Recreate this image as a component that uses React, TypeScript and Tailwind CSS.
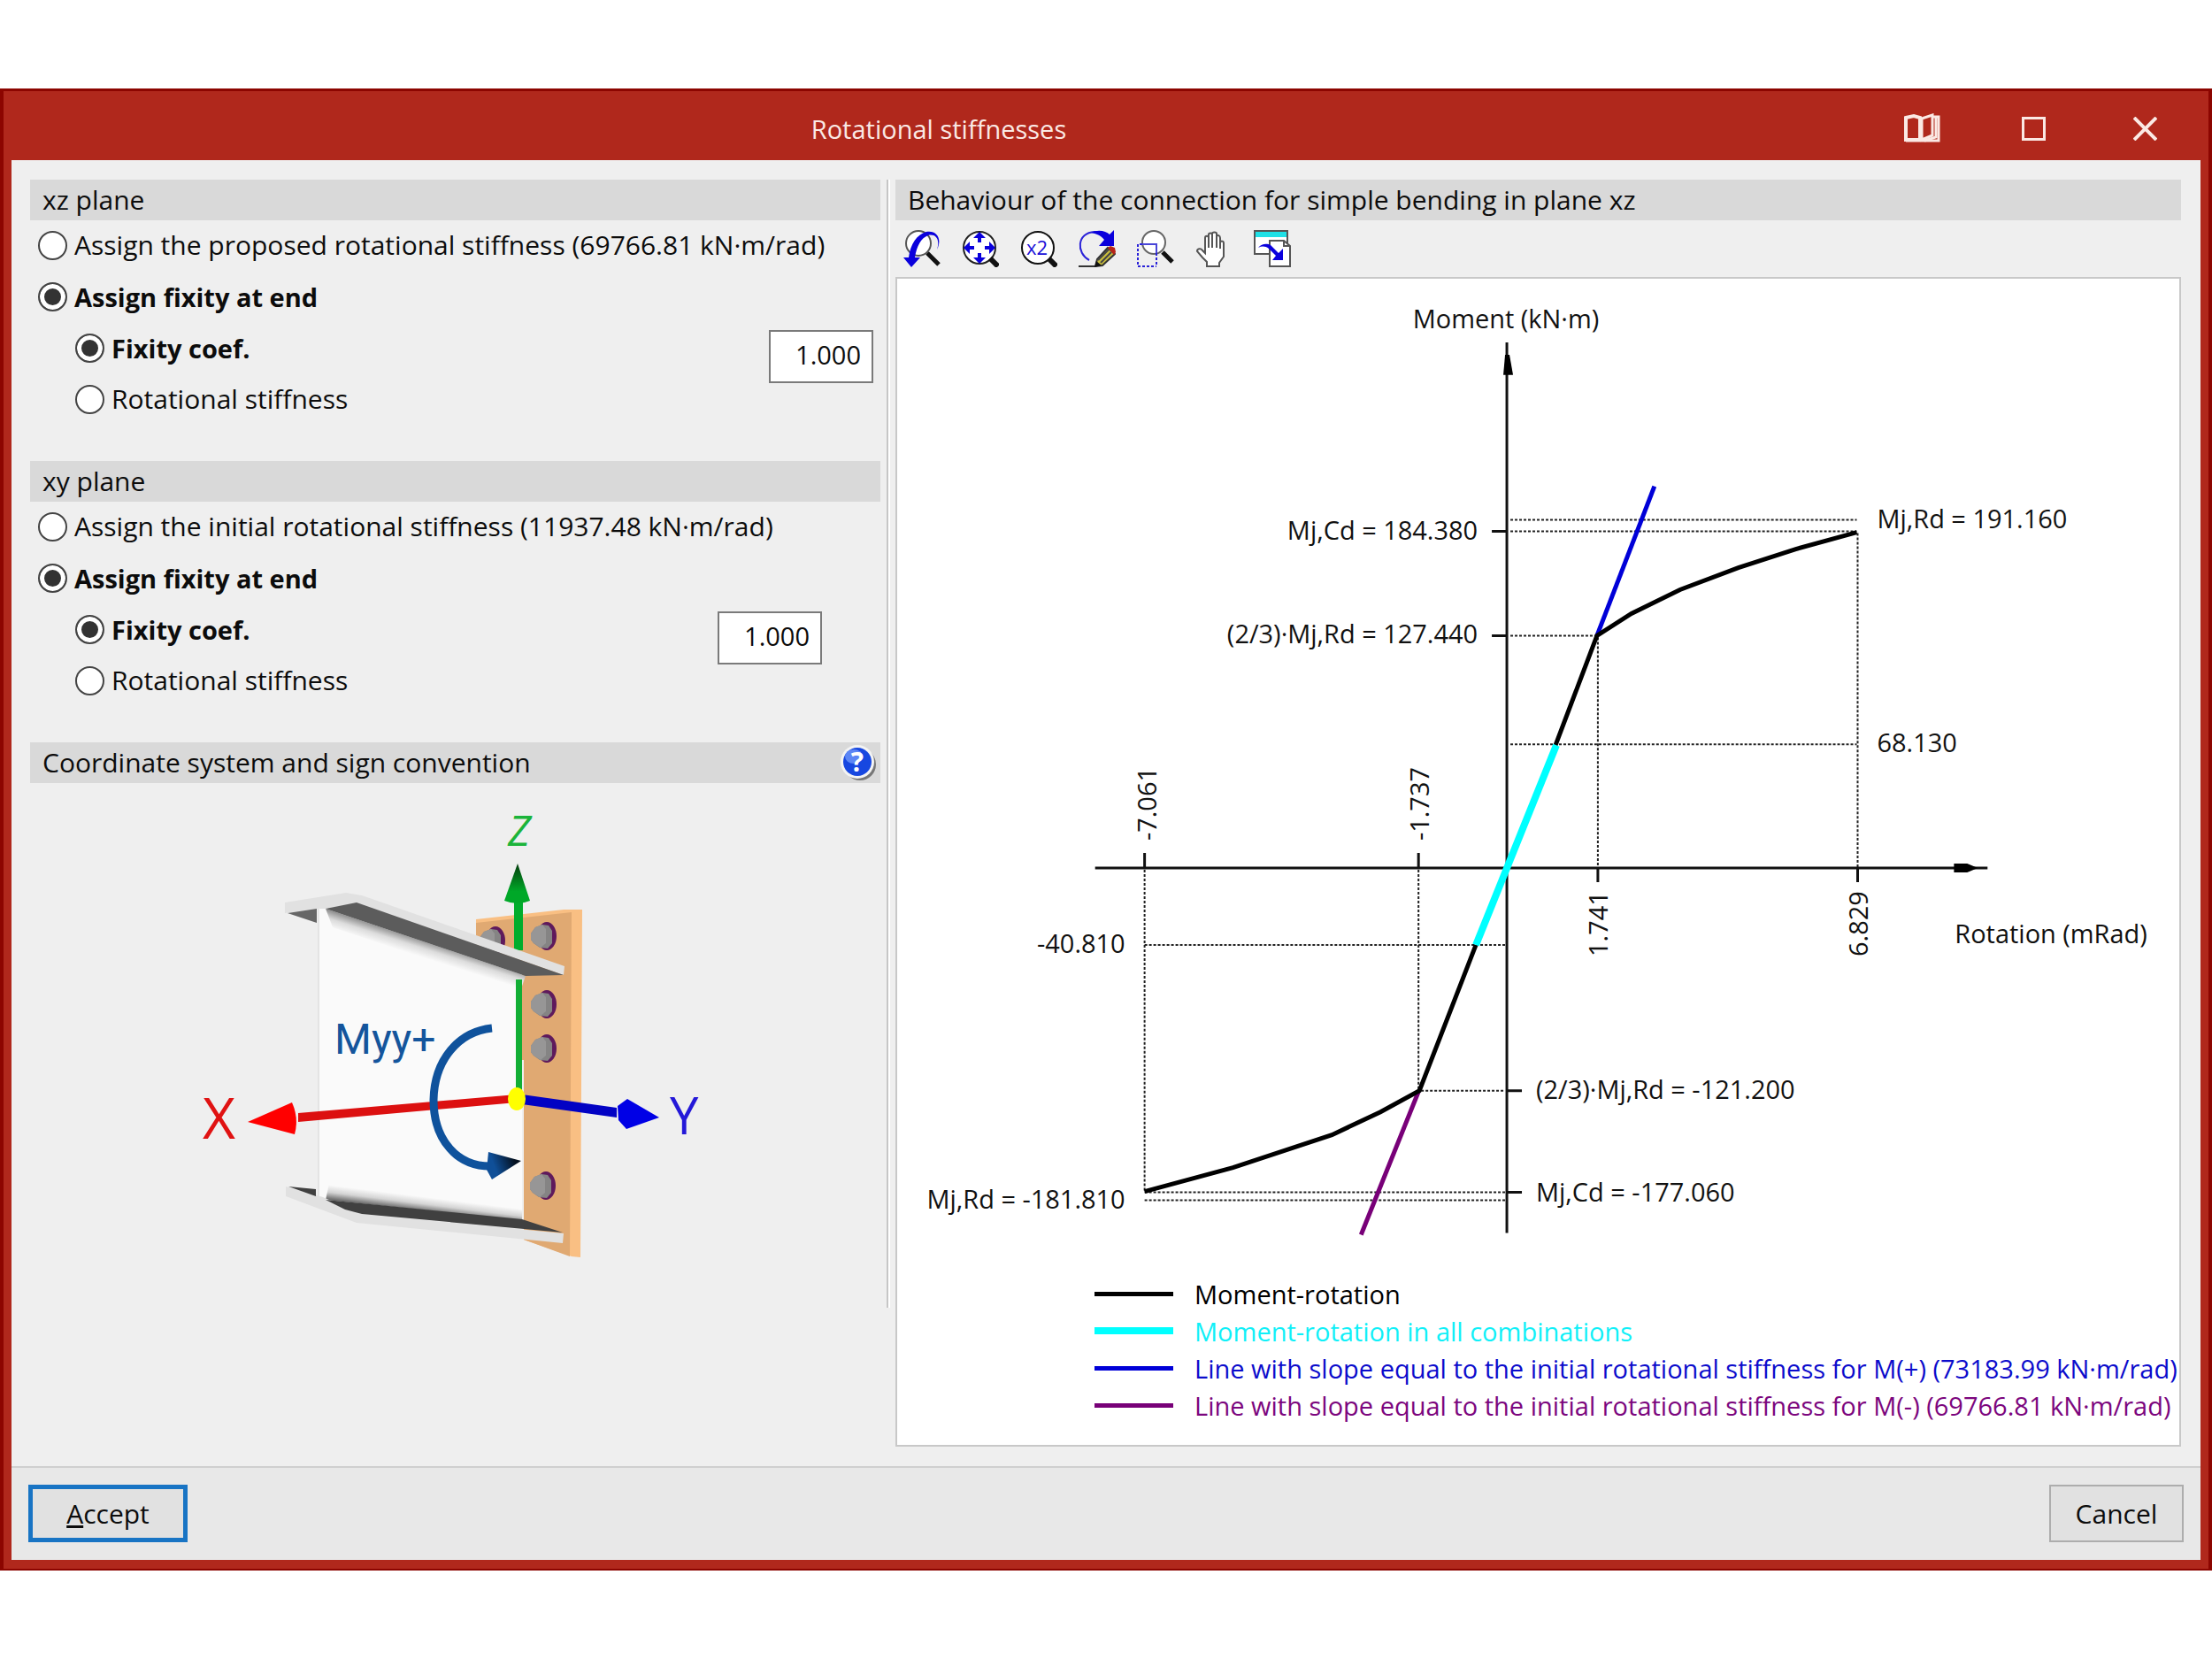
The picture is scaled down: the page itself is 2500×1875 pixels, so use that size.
import React from "react";

type Plane = {
  id: string;
  title: string;
  assignLabel: string;
  inputClass: string;
};

const planes: Plane[] = [
  {
    id: "xz",
    title: "xz plane",
    assignLabel: "Assign the proposed rotational stiffness (69766.81 kN·m/rad)",
    inputClass: "mr-2",
  },
  {
    id: "xy",
    title: "xy plane",
    assignLabel: "Assign the initial rotational stiffness (11937.48 kN·m/rad)",
    inputClass: "mr-[66px]",
  },
];

const legend = [
  { label: "Moment-rotation", line: "h-[5px] bg-black", text: "text-black" },
  { label: "Moment-rotation in all combinations", line: "h-[8px] bg-[#00ffff]", text: "text-[#10f0f8]" },
  {
    label: "Line with slope equal to the initial rotational stiffness for M(+) (73183.99 kN·m/rad)",
    line: "h-[5px] bg-[#0000d8]",
    text: "text-[#0c0ccc]",
  },
  {
    label: "Line with slope equal to the initial rotational stiffness for M(-) (69766.81 kN·m/rad)",
    line: "h-[5px] bg-[#780078]",
    text: "text-[#7c067e]",
  },
];

function SectionHeader({ title, children }: { title: string; children?: React.ReactNode }) {
  return (
    <div className="flex h-[46px] items-center justify-between bg-[#d9d9d9] pr-1 pb-px pl-[14px] text-[30px]">
      <h2>{title}</h2>
      {children}
    </div>
  );
}

function Radio({ name, label, checked }: { name: string; label: string; checked?: boolean }) {
  return (
    <label
      className={
        checked
          ? "flex h-[58px] items-center gap-2 pb-0.5 text-[29px] font-bold"
          : "flex h-[58px] items-center gap-2 pb-0.5 text-[30px]"
      }
    >
      <input
        type="radio"
        name={name}
        defaultChecked={checked}
        className="size-[33px] shrink-0 appearance-none rounded-full border-2 border-[#444] bg-white checked:bg-[#333] checked:shadow-[inset_0_0_0_5px_white]"
      />
      {label}
    </label>
  );
}

function PlaneSection({ plane }: { plane: Plane }) {
  return (
    <section className="mb-10">
      <SectionHeader title={plane.title} />
      <div className="pl-[9px]">
        <Radio name={`${plane.id}-mode`} label={plane.assignLabel} />
        <Radio name={`${plane.id}-mode`} label="Assign fixity at end" checked />
      </div>
      <div className="flex items-start justify-between pl-[51px]">
        <div>
          <Radio name={`${plane.id}-value`} label="Fixity coef." checked />
          <Radio name={`${plane.id}-value`} label="Rotational stiffness" />
        </div>
        <div className={plane.inputClass}>
          <input
            type="text"
            aria-label={`Fixity coefficient, ${plane.title}`}
            defaultValue="1.000"
            className="mt-2 h-[60px] w-[118px] border-2 border-[#7a7a7a] bg-white pr-3 pb-1.5 text-right"
          />
        </div>
      </div>
    </section>
  );
}

function Bolt({ x, y }: { x: number; y: number }) {
  return (
    <g transform={`translate(${x} ${y})`}>
      <ellipse cx="1" cy="0" rx="11" ry="16" fill="#5f1a5c" />
      <path d="M-17 -3 L-12 -10 L-4 -13 L3 -12 L7 -6 L7 8 L2 14 L-7 13 L-14 8 L-17 4 Z" fill="#858484" />
      <path d="M-17 -3 L-12 -10 L-4 -13 L0 -8 L0 8 L-6 13 L-14 8 L-17 4 Z" fill="#979696" />
    </g>
  );
}

function AxesDrawing() {
  return (
    <svg viewBox="-166 -13 961 573" className="block w-full" role="img" aria-label="Coordinate system">
      <defs>
        <linearGradient id="topShade" gradientUnits="userSpaceOnUse" x1="280" y1="164" x2="274" y2="183">
          <stop offset="0" stopColor="#8a8a8a" />
          <stop offset="0.5" stopColor="#dcdcdc" />
          <stop offset="1" stopColor="#fafafa" />
        </linearGradient>
        <linearGradient id="bottomShade" gradientUnits="userSpaceOnUse" x1="280" y1="471" x2="282" y2="455">
          <stop offset="0" stopColor="#6a6a6a" />
          <stop offset="0.5" stopColor="#d4d4d4" />
          <stop offset="1" stopColor="#fafafa" />
        </linearGradient>
        <linearGradient id="zHead" x1="0" y1="0" x2="0" y2="1">
          <stop offset="0" stopColor="#053c0d" />
          <stop offset="0.7" stopColor="#00a828" />
        </linearGradient>
        <linearGradient id="mHead" x1="0" y1="0.5" x2="1" y2="0.2">
          <stop offset="0.2" stopColor="#0f4f98" />
          <stop offset="0.8" stopColor="#04101f" />
        </linearGradient>
      </defs>

      {/* end plate and bolts */}
      <path d="M338 141 L437 130 L458 130 L456 523 L446 522 L392 503 L392 300 L338 300 Z" fill="#f9bf83" />
      <path d="M338 145 L446 133 L444 522 L392 503 L392 300 L338 300 Z" fill="#e0a972" />
      <Bolt x={359} y={165} />
      <Bolt x={417} y={160} />
      <Bolt x={417} y={237} />
      <Bolt x={417} y={287} />
      <Bolt x={416} y={442} />

      <path d="M381 119 H391 V176 H381 Z" fill="#00ad2c" />
      <path d="M385 78 L399 120 Q385 126 370 120 Z" fill="url(#zHead)" />

      {/* beam */}
      <path d="M161 128 L200 125 L390 200 L390 480 L161 456 Z" fill="#fafafa" />
      <path d="M160 129 V456" stroke="#e4e4e4" strokeWidth="2" />
      <path d="M168 129 L394 205 L388 222 L176 150 Z" fill="url(#topShade)" />
      <path d="M168 458 L390 481 L390 465 L172 440 Z" fill="url(#bottomShade)" />
      <path d="M122 122 L191 111 L209 114 L438 194 L437 204 L203 123 L168 129 L160 129 L122 134 Z" fill="#e1e1e1" />
      <path d="M168 129 L203 122 L437 204 L394 205 Z" fill="#5c5c5c" />
      <path d="M125 134 L158 129 V145 Z" fill="#666" />
      <path d="M123 443 L165 455 L209 474 L437 496 L436 507 L203 484 L123 454 Z" fill="#e1e1e1" />
      <path d="M168 458 L390 480 L436 495 L209 474 L190 469 Z" fill="#404040" />
      <path d="M126 443 L157 446 V454 Z" fill="#404040" />

      <path d="M383 209 H390 V336 H383 Z" fill="#12ae35" />

      {/* X and Y axes */}
      <path d="M384 339 L384 348 L137 370 L137 360 Z" fill="#dc1010" />
      <path d="M80 370 L130 348 Q138 366 133 384 Z" fill="#f00" />
      <path d="M390 339 L497 354 L497 365 L390 350 Z" fill="#0202c4" />
      <path d="M545 365 L509 344 L498 352 L499 368 L508 378 Z" fill="#0000e6" />
      <path d="M356 264 C318 268 291 300 290 345 C290 392 318 420 354 420" fill="none" stroke="#0f529c" strokeWidth="9" />
      <path d="M352 404 L389 414 L356 435 L350 424 Z" fill="url(#mHead)" />
      <ellipse cx="384" cy="344" rx="10" ry="13" fill="#ffff00" />

      <g>
        <text x="374" y="58" fontSize="48" fontStyle="italic" fill="#1bb43a">Z</text>
        <text x="29" y="389" fontSize="64" fill="#e01212">X</text>
        <text x="557" y="384" fontSize="58" fill="#2418d8">Y</text>
        <text x="178" y="293" fontSize="48" fontFamily="Roboto, sans-serif" fill="#14559c">Myy+</text>
      </g>
    </svg>
  );
}

function HelpIcon() {
  return (
    <svg viewBox="0 0 42 42" className="block size-[42px]">
      <circle cx="23" cy="23" r="18" fill="#777" />
      <circle cx="20" cy="20" r="19" fill="#f4f4f4" />
      <circle cx="20" cy="20" r="16" fill="#1747e0" />
      <ellipse cx="16" cy="14" rx="10" ry="8" fill="#5c86f5" />
      <text x="20" y="31" fontSize="30" fontWeight="700" textAnchor="middle" fill="#fff">?</text>
    </svg>
  );
}

const tools = [
  {
    name: "Zoom previous",
    icon: (
      <>
        <circle cx="17" cy="15" r="14" fill="#fff" stroke="#555" strokeWidth="2" />
        <path d="M27 26 L40 39" stroke="#111" strokeWidth="5" />
        <path d="M38 22 C42 10 36 4 28 6 C20 9 15 18 13 31 H19 L9 42 L0 31 H6 C8 16 15 5 26 2 C38 0 44 10 38 22 Z" fill="#0a00dc" />
      </>
    ),
  },
  {
    name: "Zoom all",
    icon: (
      <>
        <circle cx="20" cy="20" r="18" fill="#fff" stroke="#222" strokeWidth="2" />
        <path d="M32 32 L41 41" stroke="#111" strokeWidth="6" />
        <path d="M20 2 L27 9 H22 V14 H18 V9 H13 Z M20 38 L27 31 H22 V26 H18 V31 H13 Z M2 20 L9 13 V18 H14 V22 H9 V27 Z M38 20 L31 13 V18 H26 V22 H31 V27 Z" fill="#0a00dc" />
      </>
    ),
  },
  {
    name: "Zoom x2",
    icon: (
      <>
        <circle cx="20" cy="20" r="18" fill="#fff" stroke="#111" strokeWidth="2" />
        <path d="M33 33 L41 41" stroke="#111" strokeWidth="6" />
        <text x="19" y="28" fontSize="22" textAnchor="middle" fill="#1a10d8">x2</text>
      </>
    ),
  },
  {
    name: "Redraw",
    icon: (
      <>
        <path d="M12 34 C-3 26 -2 3 18 2 C24 2 29 4 33 8" fill="none" stroke="#2a22d8" strokeWidth="2" />
        <path d="M14 3 C22 -1 31 1 35 5 L40 0 V18 H23 L29 11 C25 6 20 4 14 3 Z" fill="#0a00dc" />
        <path d="M0 41 H20" stroke="#333" strokeWidth="2" />
        <path d="M33 20 L41 27 L27 40 L19 41 L21 33 Z" fill="#c9be3c" stroke="#333" strokeWidth="2" />
        <path d="M33 20 L36 18 L41 20 L42 25 L40 28 Z" fill="#b82418" />
        <path d="M25 37 L37 25 M22 34 L34 22" stroke="#444" strokeWidth="2" />
        <path d="M18 42 L20 35 L26 40 Z" fill="#111" />
      </>
    ),
  },
  {
    name: "Zoom window",
    icon: (
      <>
        <circle cx="19" cy="14" r="13" fill="#fff" stroke="#666" strokeWidth="2" />
        <path d="M29 25 L40 36" stroke="#111" strokeWidth="5" />
        <path d="M6 16 H22 V26" fill="none" stroke="#4a46d8" strokeWidth="2" />
        <path d="M22 26 V41 M6 16 H1 V41 H22" fill="none" stroke="#2a22d8" strokeWidth="2" strokeDasharray="3 2" />
      </>
    ),
  },
  {
    name: "Pan",
    icon: (
      <path
        d="M13 41 V36 L8 31 L2 24 C2 21 6 20 8 23 L11 26 V9 C11 6 15 6 15 9 V20 V5 C15 3 19 3 19 5 V20 V4 C19 2 24 2 24 4 V20 V7 C25 5 28 6 28 9 V21 V14 C29 12 32 12 32 15 V30 L27 37 V41 Z"
        fill="#fff"
        stroke="#555"
        strokeWidth="2"
      />
    ),
  },
  {
    name: "Export view",
    icon: (
      <>
        <path d="M1 1 H38 V27 H1 Z" fill="#fff" stroke="#555" strokeWidth="2" />
        <path d="M2 2 H37 V8 H2 Z" fill="#1fe0e6" />
        <path d="M18 12 H34 L41 18 V41 H18 Z" fill="#fff" stroke="#555" strokeWidth="2" />
        <path d="M34 12 V18 H41" fill="none" stroke="#555" strokeWidth="2" />
        <path d="M5 20 C9 15 15 15 19 17 L28 26 L33 21 V34 H21 L25 29 L17 21 C13 18 9 18 5 20 Z" fill="#0a00dc" />
      </>
    ),
  },
];

function Chart() {
  return (
    <svg viewBox="1013 314 1451 1128" className="block w-full" role="img" aria-label="Moment-rotation diagram">
      {/* guides */}
      <g fill="none" stroke="#222" strokeWidth="2" strokeDasharray="3 2">
        <path d="M1707 587 H2099" />
        <path d="M1707 600 H2099" />
        <path d="M1707 718 H1805" />
        <path d="M1707 841 H2099" />
        <path d="M1806 720 V981" />
        <path d="M2100 602 V981" />
        <path d="M1293 983 V1346" />
        <path d="M1603 983 V1232" />
        <path d="M1293 1068 H1701" />
        <path d="M1606 1233 H1701" />
        <path d="M1293 1348 H1701" />
        <path d="M1293 1357 H1701" />
      </g>

      {/* axes and ticks */}
      <g fill="none" stroke="#111" strokeWidth="3">
        <path d="M1703 386 V1394" />
        <path d="M1237 981 H2247" />
        <path d="M1686 600 H1703 M1686 718 H1703 M1703 1233 H1720 M1703 1348 H1720" />
        <path d="M1293 964 V981 M1603 964 V981 M1806 981 V997 M2100 981 V997" />
      </g>
      <path d="M1701 400 H1706 L1710 423 H1699 Z" />
      <path d="M2209 976 H2224 L2236 981 L2224 986 H2209 Z" />

      {/* curves */}
      <g fill="none" strokeWidth="5">
        <path d="M1805 718 L1870 549" stroke="#0000d8" />
        <path d="M1603 1234 L1538 1396" stroke="#780078" />
        <path
          d="M1293 1347 L1393 1320 L1505 1283 L1560 1257 L1604 1233 L1668 1068"
          stroke="#000"
        />
        <path d="M1758 842 L1805 718 L1844 693 L1899 666 L1965 641 L2030 620 L2099 601" stroke="#000" />
        <path d="M1668 1068 L1759 842" stroke="#00ffff" strokeWidth="8" />
      </g>

      <g fontSize="29" fill="#111">
        <text x="1702" y="370" textAnchor="middle">Moment (kN·m)</text>
        <text x="2210" y="1066">Rotation (mRad)</text>
        <text x="1670" y="609" textAnchor="end">Mj,Cd = 184.380</text>
        <text x="1670" y="727" textAnchor="end">(2/3)·Mj,Rd = 127.440</text>
        <text x="2122" y="596">Mj,Rd = 191.160</text>
        <text x="2122" y="850">68.130</text>
        <text x="1271" y="1077" textAnchor="end">-40.810</text>
        <text x="1271" y="1366" textAnchor="end">Mj,Rd = -181.810</text>
        <text x="1736" y="1242">(2/3)·Mj,Rd = -121.200</text>
        <text x="1736" y="1358">Mj,Cd = -177.060</text>
        <text transform="translate(1306 950) rotate(-90)">-7.061</text>
        <text transform="translate(1615 950) rotate(-90)">-1.737</text>
        <text transform="translate(1817 1081) rotate(-90)">1.741</text>
        <text transform="translate(2112 1081) rotate(-90)">6.829</text>
      </g>
    </svg>
  );
}

function TitleBar() {
  return (
    <header className="flex h-[78px] items-center pt-1.5 text-[#fbe9e4]">
      <h1 className="flex-1 text-center">Rotational stiffnesses</h1>
      <button type="button" aria-label="Help" className="flex h-full w-[126px] items-center justify-center">
        <svg viewBox="0 0 42 34" className="h-[34px] w-[42px]" fill="none" stroke="currentColor">
          <path d="M3 5 L12 3 L19 5 V30 H3 Z" strokeWidth="4" />
          <path d="M21 6 L33 2 V25 L21 30 Z" strokeWidth="3" />
          <path d="M37 4 V27 L24 31" strokeWidth="3" />
          <path d="M34 4 H40 V31 H3" strokeWidth="3" />
        </svg>
      </button>
      <button type="button" aria-label="Maximize" className="flex h-full w-[126px] items-center justify-center">
        <span className="size-[27px] border-[3px] border-current" />
      </button>
      <button type="button" aria-label="Close" className="flex h-full w-[126px] items-center justify-center">
        <svg viewBox="0 0 27 27" className="size-[27px]" stroke="currentColor" strokeWidth="4">
          <path d="M1 1 L26 26 M26 1 L1 26" />
        </svg>
      </button>
    </header>
  );
}

export default function App() {
  return (
    <main className="bg-white py-[100px] font-['Open_Sans','Noto_Sans',sans-serif] text-[29px] leading-none text-[#0c0c0c]">
      <div className="border-x-4 border-t-[3px] border-b-2 border-[#8c0500] bg-[#b0281c] px-[9px] pb-[10px]">
        <TitleBar />

        <div className="bg-[#efefef]">
          <div className="grid grid-cols-[961fr_17px_1453fr] pt-[22px] pr-[22px] pb-[22px] pl-[21px]">
            <div>
              {planes.map((p) => (
                <PlaneSection key={p.id} plane={p} />
              ))}
              <section>
                <SectionHeader title="Coordinate system and sign convention">
                  <button type="button" aria-label="Help">
                    <HelpIcon />
                  </button>
                </SectionHeader>
                <AxesDrawing />
              </section>
            </div>

            <div className="mx-auto mb-[157px] w-1 border-l-2 border-r-2 border-l-[#c6c6c6] border-r-white" />

            <section className="min-w-0">
              <SectionHeader title="Behaviour of the connection for simple bending in plane xz" />
              <div className="flex h-16 items-center gap-6 pl-[9px]">
                {tools.map((t) => (
                  <button key={t.name} type="button" aria-label={t.name} title={t.name}>
                    <svg viewBox="0 0 42 42" className="block size-[42px]" fill="none">
                      {t.icon}
                    </svg>
                  </button>
                ))}
              </div>
              <div className="overflow-hidden border-2 border-[#c8c8c8] bg-white pb-6">
                <Chart />
                <ul className="pl-[223px]">
                  {legend.map((l) => (
                    <li key={l.label} className="flex h-[42px] items-center gap-6 whitespace-nowrap">
                      <span className={`w-[89px] shrink-0 ${l.line}`} />
                      <span className={l.text}>{l.label}</span>
                    </li>
                  ))}
                </ul>
              </div>
            </section>
          </div>

          <footer className="flex items-center justify-between border-t-2 border-[#cfcfcf] bg-[#e8e8e8] px-[19px] pt-[19px] pb-5">
            <button type="button" className="h-[65px] w-[180px] border-[5px] border-[#1874c4] bg-[#e1e1e1] text-[30px]">
              <span className="underline">A</span>ccept
            </button>
            <button type="button" className="h-[65px] w-[152px] border-2 border-[#adadad] bg-[#e1e1e1] text-[30px]">
              Cancel
            </button>
          </footer>
        </div>
      </div>
    </main>
  );
}
